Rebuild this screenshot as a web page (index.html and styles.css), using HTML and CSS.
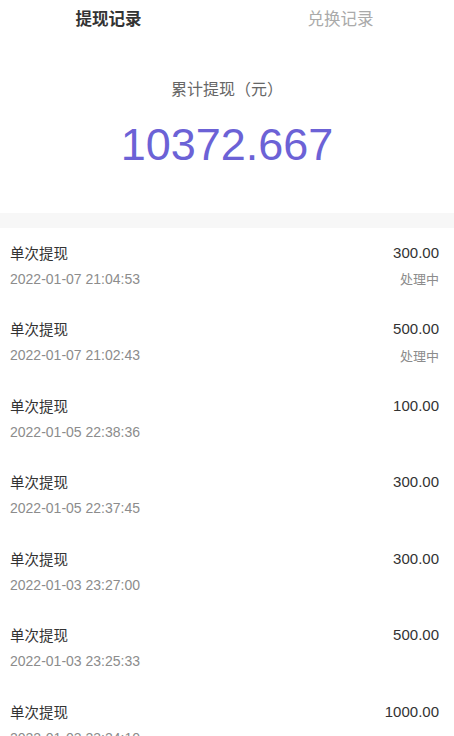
FILE: index.html
```html
<!DOCTYPE html>
<html lang="zh-CN">
<head>
    <meta charset="UTF-8">
    <meta name="viewport" content="width=device-width, initial-scale=1.0">
    <title>提现记录</title>
    <link rel="stylesheet" href="styles.css">
</head>
<body>
    <div class="tabs">
        <div class="tab active">提现记录</div>
        <div class="tab">兑换记录</div>
    </div>
    <div class="summary">
        <div class="summary-label">累计提现（元）</div>
        <div class="summary-total">10372.667</div>
    </div>
    <div class="divider"></div>
    <ul class="records">
        <li class="record">
            <div class="record-line">
                <span class="record-title">单次提现</span>
                <span class="record-amount">300.00</span>
            </div>
            <div class="record-line sub">
                <span class="record-time">2022-01-07 21:04:53</span>
                <span class="record-status">处理中</span>
            </div>
        </li>
        <li class="record">
            <div class="record-line">
                <span class="record-title">单次提现</span>
                <span class="record-amount">500.00</span>
            </div>
            <div class="record-line sub">
                <span class="record-time">2022-01-07 21:02:43</span>
                <span class="record-status">处理中</span>
            </div>
        </li>
        <li class="record">
            <div class="record-line">
                <span class="record-title">单次提现</span>
                <span class="record-amount">100.00</span>
            </div>
            <div class="record-line sub">
                <span class="record-time">2022-01-05 22:38:36</span>
            </div>
        </li>
        <li class="record">
            <div class="record-line">
                <span class="record-title">单次提现</span>
                <span class="record-amount">300.00</span>
            </div>
            <div class="record-line sub">
                <span class="record-time">2022-01-05 22:37:45</span>
            </div>
        </li>
        <li class="record">
            <div class="record-line">
                <span class="record-title">单次提现</span>
                <span class="record-amount">300.00</span>
            </div>
            <div class="record-line sub">
                <span class="record-time">2022-01-03 23:27:00</span>
            </div>
        </li>
        <li class="record">
            <div class="record-line">
                <span class="record-title">单次提现</span>
                <span class="record-amount">500.00</span>
            </div>
            <div class="record-line sub">
                <span class="record-time">2022-01-03 23:25:33</span>
            </div>
        </li>
        <li class="record">
            <div class="record-line">
                <span class="record-title">单次提现</span>
                <span class="record-amount">1000.00</span>
            </div>
            <div class="record-line sub">
                <span class="record-time">2022-01-03 23:24:10</span>
            </div>
        </li>
    </ul>
</body>
</html>
```

FILE: styles.css
```css
body {
    margin: 0;
    background: #ffffff;
    font-family: 'Liberation Sans', 'Noto Sans CJK SC', sans-serif;
    color: #333333;
    overflow: hidden;
}
.tabs {
    display: flex;
    height: 36px;
}
.tab {
    flex: 1;
    display: flex;
    justify-content: center;
    align-items: center;
    font-size: 16.5px;
    color: #aaaaaa;
}
.tab.active {
    color: #333333;
    font-weight: 700;
    transform: translateX(-5px);
}
.summary {
    padding-top: 42px;
    height: 135px;
    text-align: center;
}
.summary-label {
    font-size: 16px;
    line-height: 24px;
    color: #666666;
}
.summary-total {
    margin-top: 7px;
    font-size: 45px;
    line-height: 72px;
    color: #6c62d6;
}
.divider {
    height: 15px;
    background: #f7f7f7;
}
.records {
    list-style: none;
    margin: 0;
    padding: 0;
}
.record {
    padding: 14px 15px 16px 10px;
    height: 46.5px;
}
.record-line {
    display: flex;
    justify-content: space-between;
    align-items: center;
    height: 20px;
}
.record-line.sub {
    margin-top: 6.5px;
}
.record-title {
    font-size: 14.5px;
    color: #333333;
}
.record-amount {
    font-size: 15px;
    color: #333333;
}
.record-time {
    font-size: 14px;
    color: #8c8c8c;
}
.record-status {
    font-size: 13px;
    color: #8c8c8c;
}
```
